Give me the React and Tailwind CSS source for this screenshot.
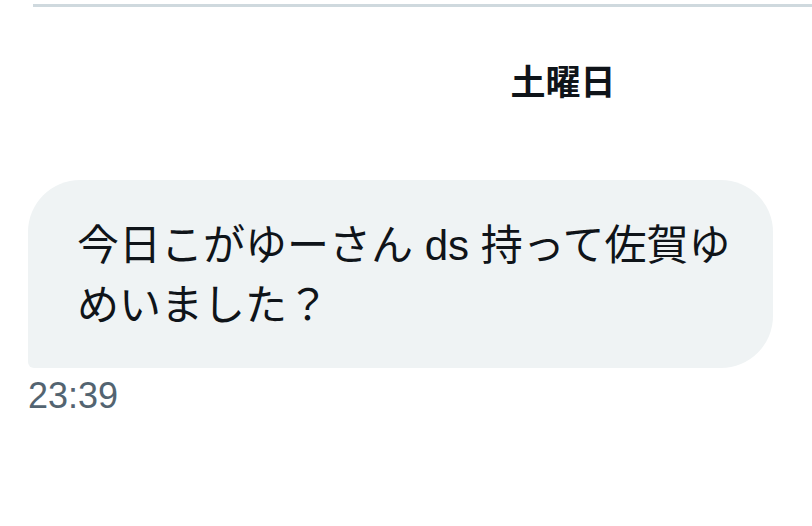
export default function App() {
  return (
    <div
      className="w-[812px] h-[526px] bg-white overflow-hidden"
      style={{ fontFamily: '"Liberation Sans", "Noto Sans CJK JP", sans-serif' }}
    >
      {/* top divider */}
      <div className="ml-[33px] mt-[4px] h-[3px] bg-[#cfd9de]" />

      {/* day header */}
      <div className="ml-[314px] w-[498px] mt-[56px] text-center text-[35px] leading-[40px] font-bold text-[#0f1419]">
        土曜日
      </div>

      {/* message bubble */}
      <div className="ml-[28px] mt-[77px] w-[745px] h-[188px] bg-[#eff3f4] rounded-[52px] rounded-bl-[6px] pl-[49px] pt-[36px]">
        <p className="text-[42px] leading-[60px] text-[#0f1419] whitespace-nowrap">
          今日こがゆーさん ds 持って佐賀ゆ
          <br />
          めいました？
        </p>
      </div>

      {/* timestamp */}
      <div className="ml-[28px] mt-[8px] text-[36px] leading-[40px] text-[#536471]">
        23:39
      </div>
    </div>
  );
}
